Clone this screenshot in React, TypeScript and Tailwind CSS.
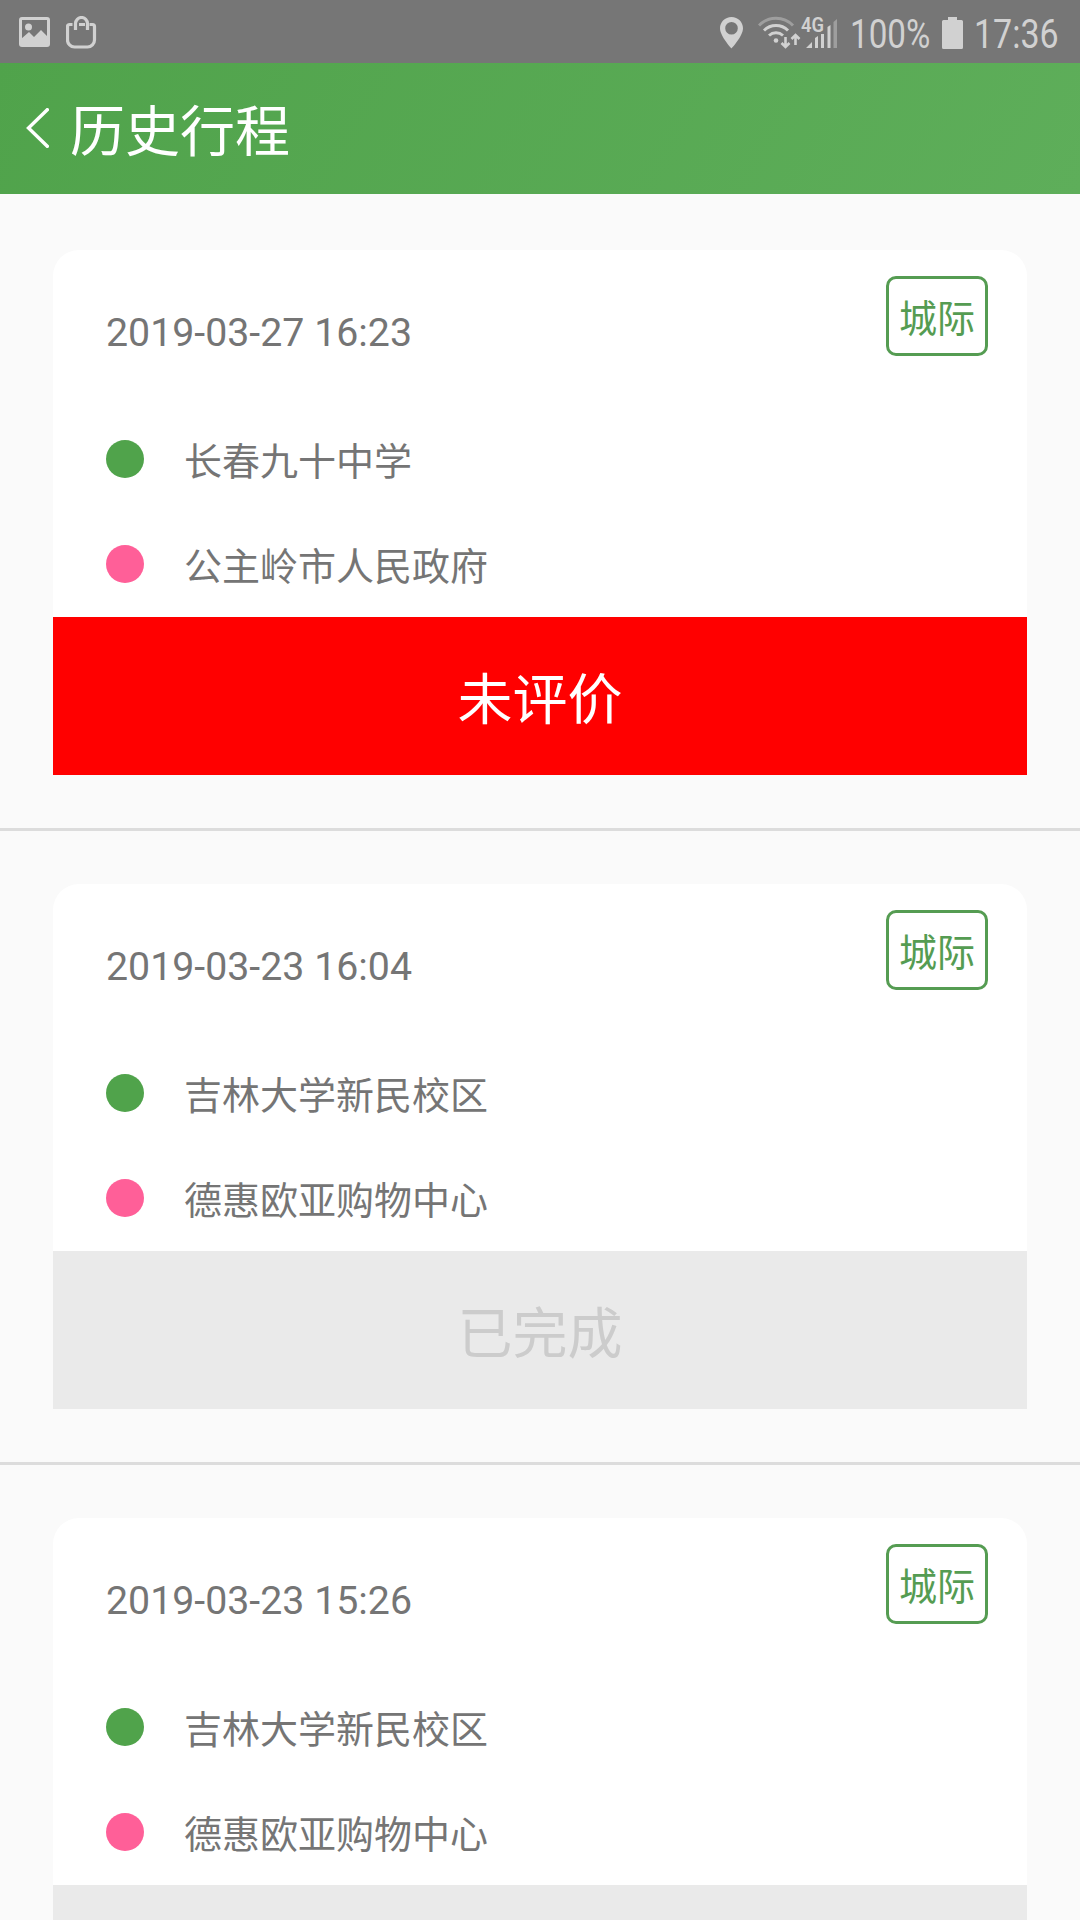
type Trip = {
  time: string
  type: string
  from: string
  to: string
  rated: boolean
}

const trips: Trip[] = [
  { time: '2019-03-27 16:23', type: '城际', from: '长春九十中学', to: '公主岭市人民政府', rated: false },
  { time: '2019-03-23 16:04', type: '城际', from: '吉林大学新民校区', to: '德惠欧亚购物中心', rated: true },
  { time: '2019-03-23 15:26', type: '城际', from: '吉林大学新民校区', to: '德惠欧亚购物中心', rated: true },
]

function StatusBar() {
  return (
    <div className="flex h-[63px] shrink-0 items-start bg-[#767676] pl-[19px] font-['Roboto',sans-serif] text-[#d1d1d1]">
      {/* Notifications */}
      <svg className="mt-[17px] h-[30px] w-[31px]" viewBox="0 0 31 30">
        <rect x="1.5" y="1.5" width="28" height="27" rx="1.5" fill="none" stroke="currentColor" strokeWidth="3" />
        <circle cx="9.5" cy="10" r="3.5" fill="currentColor" />
        <path d="M2 22l8-7 5 5 7-7 7 7v8H2z" fill="currentColor" />
      </svg>
      <svg className="ml-4 mt-4 h-[33px] w-[31px]" viewBox="0 0 31 33" fill="none" stroke="currentColor" strokeWidth="3.2">
        <path d="M6.5 8.5h-3a2 2 0 0 0-2 2v13.5a7 7 0 0 0 7 7h13a7 7 0 0 0 7-7V10.5a2 2 0 0 0-2-2h-3" />
        <path d="M9.5 14V7.5a6 6 0 0 1 12 0V14M13 8.5h6" />
      </svg>

      {/* System */}
      <div className="ml-auto flex items-start">
        <svg className="mt-[17px] h-8 w-6" viewBox="0 0 24 32">
          <path
            d="M11.5 0C5 0 0 5 0 11.3c0 8 11.5 20.2 11.5 20.2S23 19.3 23 11.3C23 5 18 0 11.5 0zM11.5 5a6.3 6.3 0 1 1 0 12.6 6.3 6.3 0 0 1 0-12.6z"
            fill="currentColor"
            fillRule="evenodd"
          />
        </svg>
        <svg className="ml-3.5 mt-4 h-[33px] w-[43px]" viewBox="0 0 43 33" fill="none" stroke="currentColor" strokeWidth="3">
          <path d="M1 9.5a23.5 23.5 0 0 1 34 0" opacity="0.45" />
          <path d="M6 14.5a17 17 0 0 1 24 0M11 19.5a10.5 10.5 0 0 1 14 0" />
          <circle cx="18" cy="24.5" r="2.3" fill="currentColor" stroke="none" />
          <path d="M27.5 21v9.5M23.5 27l4 4 4-4M37.5 29V19.5M33.5 23l4-4 4 4" strokeWidth="2.6" />
        </svg>
        <svg className="mt-4 h-[33px] w-[37px] overflow-visible" viewBox="0 0 37 33" fill="currentColor">
          <text x="0" y="16" fontSize="19.5" fontWeight="600" textLength="23" lengthAdjust="spacingAndGlyphs">4G</text>
          <path d="M5 32l6-6v6zM14 22l3-2v12h-3zM20 18h3v14h-3zM26.5 11l3-2v23h-3z" />
          <path d="M32.5 6l3.5-3v29h-3.5z" opacity="0.45" />
        </svg>
        <div className="ml-3 mt-[11px] w-[92px] text-[40px] leading-[47px]">
          <span className="inline-block origin-left scale-x-[0.83]">100%</span>
        </div>
        <svg className="mt-[17px] h-8 w-[21px]" viewBox="0 0 21 32" fill="currentColor">
          <path d="M6 0h9v3h4.5q1.5 0 1.5 1.5v26q0 1.5-1.5 1.5h-18Q0 32 0 30.5v-26Q0 3 1.5 3H6z" />
        </svg>
        <div className="ml-[11px] mt-[11px] w-[106px] text-[40px] leading-[47px]">
          <span className="inline-block origin-left scale-x-[0.85]">17:36</span>
        </div>
      </div>
    </div>
  )
}

function Header() {
  return (
    <header className="flex h-[131px] shrink-0 items-center bg-linear-120 from-[#50a34b] to-[#5eae5a] pl-[25px] text-white">
      <svg className="mb-0.5 h-10 w-6" viewBox="0 0 24 40" fill="none" stroke="currentColor" strokeWidth="3.4">
        <path d="M23.5 0.5L3.5 20L23.5 39.5" />
      </svg>
      <h1 className="ml-[21px] pb-1 text-[55px] leading-[80px]">历史行程</h1>
    </header>
  )
}

function Stop({ name, color }: { name: string; color: string }) {
  return (
    <div className="flex h-[38px] items-center">
      <span className={`size-[38px] rounded-full ${color}`} />
      <span className="ml-10 pb-px text-[38px] leading-[38px]">{name}</span>
    </div>
  )
}

function TripItem({ trip }: { trip: Trip }) {
  return (
    <li className="border-b-[3px] border-[#dcdcdc] p-[53px]">
      <div className="h-[367px] rounded-t-[26px] bg-white pl-[53px] pt-[26px] text-[#757575]">
        <div className="flex h-20 items-start justify-between pr-[39px]">
          <time className="mt-[37px] font-['Roboto',sans-serif] text-[39.3px] leading-10">{trip.time}</time>
          <span className="flex h-20 w-[102px] items-center justify-center rounded-[10px] border-[3px] border-[#559c52] pb-px text-[38px] leading-[38px] text-[#559c52]">
            {trip.type}
          </span>
        </div>
        <div className="mt-[84px] flex flex-col gap-[67px]">
          <Stop name={trip.from} color="bg-[#50a34b]" />
          <Stop name={trip.to} color="bg-[#ff5f98]" />
        </div>
      </div>
      <button
        className={`flex h-[158px] w-full items-center justify-center pb-[3px] text-[55px] leading-[80px] ${
          trip.rated ? 'bg-[#eaeaea] text-[#cccccc]' : 'bg-[#ff0000] text-white'
        }`}
      >
        {trip.rated ? '已完成' : '未评价'}
      </button>
    </li>
  )
}

export default function App() {
  return (
    <div className="flex h-[1920px] w-[1080px] flex-col overflow-hidden bg-[#fafafa] font-['Noto_Sans_CJK_SC',sans-serif]">
      <StatusBar />
      <Header />
      <ul className="min-h-0 flex-1 overflow-hidden pt-[3px]">
        {trips.map((trip) => (
          <TripItem key={trip.time} trip={trip} />
        ))}
      </ul>
    </div>
  )
}
